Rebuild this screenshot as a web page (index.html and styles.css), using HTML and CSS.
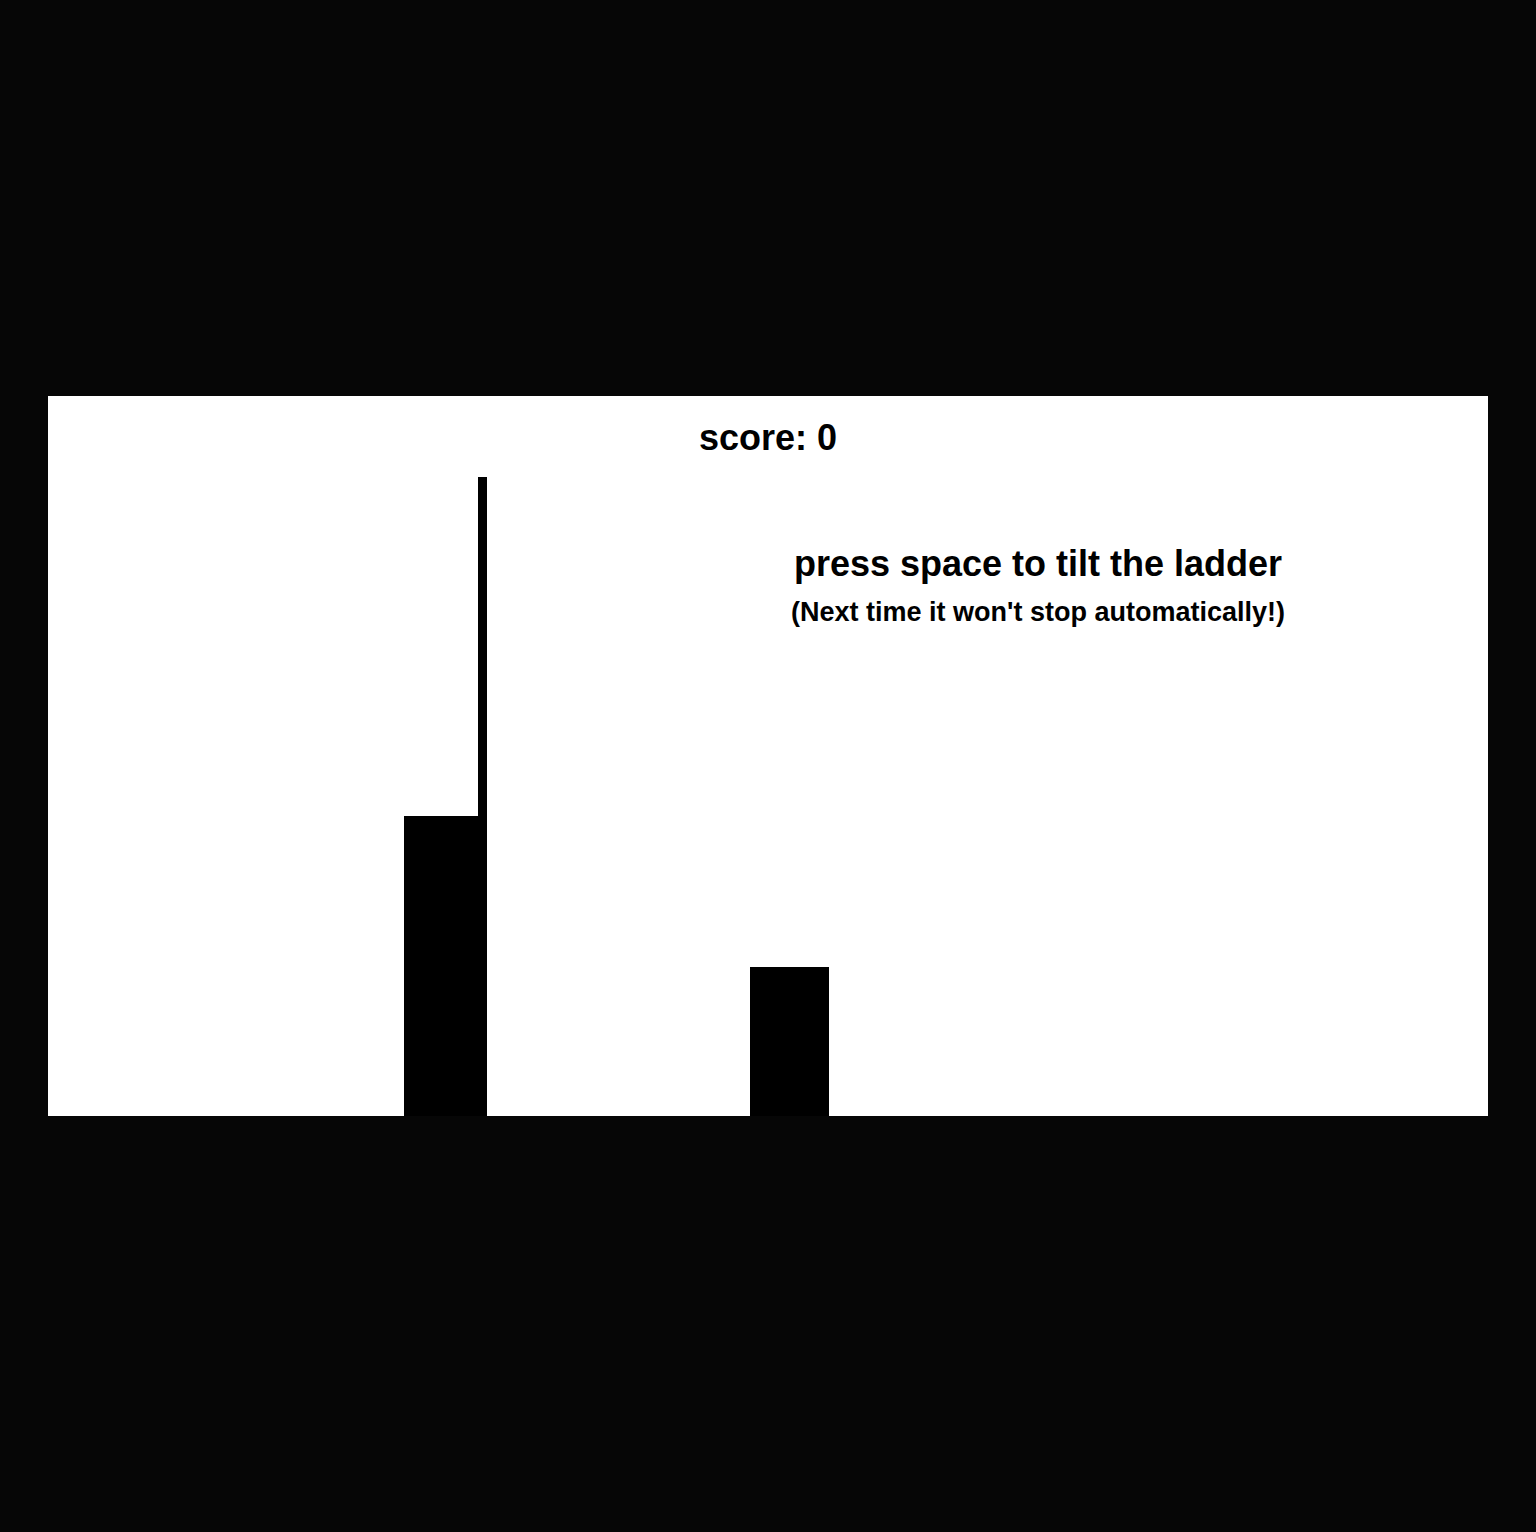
FILE: index.html
```html
<!DOCTYPE html>
<html lang="en">
<head>
    <meta charset="UTF-8">
    <meta name="viewport" content="width=device-width, initial-scale=1.0">
    <title>Stick Hero</title>
    <link rel="stylesheet" href="styles.css">
</head>
<body>
    <div class="game">
        <div class="score">score: 0</div>
        <div class="hint">
            <div class="hint-main">press space to tilt the ladder</div>
            <div class="hint-sub">(Next time it won't stop automatically!)</div>
        </div>
        <div class="scene">
            <!-- 当前站着的柱子 + 梯子 -->
            <div class="tower">
                <div class="ladder"></div>
                <div class="pillar pillar-start"></div>
            </div>
            <div class="pillar pillar-next"></div>
        </div>
    </div>
</body>
</html>
```

FILE: styles.css
```css
body {
    background-color: #060606;
    margin: 0;
    padding: 396px 48px 0 48px;
    min-height: 100vh;
    box-sizing: border-box;
    font-family: "Liberation Sans", Arial, sans-serif;
    color: #000;
}

.game {
    width: 1440px;
    height: 720px;
    background: #fff;
    display: flex;
    flex-direction: column;
    overflow: hidden;
}

.score {
    padding-top: 22px;
    font-size: 36px;
    font-weight: bold;
    line-height: 40px;
    text-align: center;
}

.hint {
    width: 600px;
    margin: 86px 0 0 690px;
    text-align: center;
    font-weight: bold;
}

.hint-main {
    font-size: 36px;
    line-height: 40px;
}

.hint-sub {
    margin-top: 13px;
    font-size: 27px;
    line-height: 30px;
}

.scene {
    flex: 1;
    min-height: 0;
    display: flex;
    align-items: flex-end;
}

.tower {
    margin-left: 356px;
    display: flex;
    flex-direction: column;
    align-items: flex-end;
}

.ladder {
    width: 9px;
    height: 339px;
    background: #000;
}

.pillar {
    background: #000;
}

.pillar-start {
    width: 83px;
    height: 300px;
}

.pillar-next {
    margin-left: 263px;
    width: 79px;
    height: 149px;
}
```
